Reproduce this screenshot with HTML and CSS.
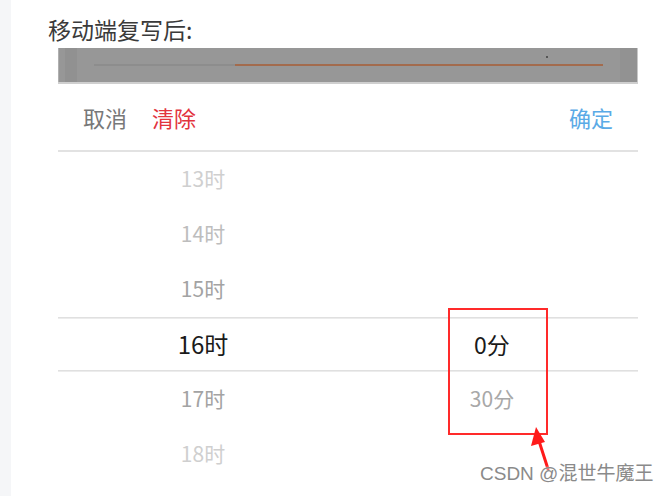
FILE: index.html
```html
<!DOCTYPE html>
<html lang="zh-CN">
<head>
<meta charset="utf-8">
<title>移动端复写后</title>
<link rel="stylesheet" href="styles.css">
</head>
<body>
<div class="page">
  <aside class="strip"></aside>
  <main class="content">
    <h2 class="title">移动端复写后:</h2>
    <div class="shot">
      <div class="topbar"><span class="dot"></span></div>
      <div class="toolbar">
        <div class="left-actions">
          <span class="btn cancel">取消</span>
          <span class="btn clear">清除</span>
        </div>
        <span class="btn ok">确定</span>
      </div>
      <div class="picker">
        <div class="row"><span class="cell h far">13时</span><span class="cell m"></span></div>
        <div class="row"><span class="cell h mid">14时</span><span class="cell m"></span></div>
        <div class="row"><span class="cell h near">15时</span><span class="cell m"></span></div>
        <div class="row selected"><span class="cell h sel">16时</span><span class="cell m sel-m">0分</span></div>
        <div class="row"><span class="cell h near">17时</span><span class="cell m near-m">30分</span></div>
        <div class="row"><span class="cell h far">18时</span><span class="cell m"></span></div>
      </div>
    </div>
  </main>
</div>
<div class="mark-box"></div>
<svg class="arrow" width="30" height="50" viewBox="0 0 30 50">
  <line x1="20" y1="44" x2="11" y2="16" stroke="#ff1a1a" stroke-width="3" stroke-linecap="round"/>
  <polygon points="8,2 3,21 17,17" fill="#ff1a1a"/>
</svg>
<div class="watermark">CSDN @混世牛魔王</div>
</body>
</html>
```
FILE: styles.css
```css
html, body {
  margin: 0;
  padding: 0;
  background: #ffffff;
}
body {
  width: 667px;
  height: 496px;
  overflow: hidden;
  position: relative;
  font-family: "Noto Sans CJK SC", "Noto Sans", sans-serif;
}
.page {
  display: flex;
  height: 496px;
}
.strip {
  width: 11px;
  flex: none;
  background: #f5f6f8;
}
.content {
  padding-left: 37px;
  flex: 1;
}
.title {
  margin: 0;
  padding-top: 14px;
  height: 34px;
  line-height: 30px;
  font-size: 23px;
  font-weight: normal;
  color: #3a3a3a;
}
.shot {
  margin-left: 10px;
  width: 580px;
}
.topbar {
  position: relative;
  height: 34px;
  border-bottom: 2px solid #cfcfcf;
  background:
    linear-gradient(to right, transparent 36px, #8d8d8d 36px, #8d8d8d 177px, #a36b4d 177px, #a36b4d 545px, transparent 545px) 0 16px / 100% 2px no-repeat,
    linear-gradient(to right, #b0b0b0 0, #b0b0b0 1px, #979797 1px, #979797 7px, #919191 7px, #919191 19px, #979797 19px, #979797 562px, #929292 562px, #929292 579px, #c8c8c8 579px);
}
.dot {
  position: absolute;
  left: 488px;
  top: 8px;
  width: 2px;
  height: 2px;
  background: #555;
}
.toolbar {
  height: 66px;
  border-bottom: 2px solid #e2e2e2;
  display: flex;
  align-items: center;
  justify-content: space-between;
  padding: 0 25px;
}
.left-actions {
  display: flex;
  gap: 25px;
}
.btn {
  font-size: 22px;
  line-height: 28px;
}
.cancel { color: #787878; }
.clear { color: #e2333d; }
.ok { color: #5aaae6; }
.picker {
  display: flex;
  flex-direction: column;
}
.row {
  display: grid;
  grid-template-columns: 290px 290px;
  height: 55px;
  align-items: center;
}
.row.selected {
  box-shadow: inset 0 1px 0 #e0e0e0, inset 0 2px 0 #ececec, inset 0 -1px 0 #ececec, inset 0 -2px 0 #e0e0e0;
}
.cell {
  text-align: center;
  font-size: 21px;
  line-height: 28px;
  padding-bottom: 3px;
}
.far { color: #cfcfcf; }
.mid { color: #bdbdbd; }
.near { color: #a3a3a3; }
.sel {
  color: #1a1a1a;
  font-size: 24px;
  padding-bottom: 2px;
}
.m { padding-right: 2px; }
.sel-m {
  color: #1a1a1a;
  font-size: 23px;
  padding-bottom: 2px;
}
.near-m {
  color: #a8a8a8;
  font-size: 21px;
}
.mark-box {
  position: absolute;
  left: 448px;
  top: 308px;
  width: 96px;
  height: 123px;
  border: 2px solid #ff2a2a;
}
.arrow {
  position: absolute;
  left: 528px;
  top: 425px;
}
.watermark {
  position: absolute;
  left: 480px;
  top: 462px;
  font-family: "Liberation Sans", "Noto Sans CJK SC", sans-serif;
  font-size: 19px;
  line-height: 24px;
  color: #8a8a8a;
  text-shadow: 0 0 2px #ffffff;
}
```
